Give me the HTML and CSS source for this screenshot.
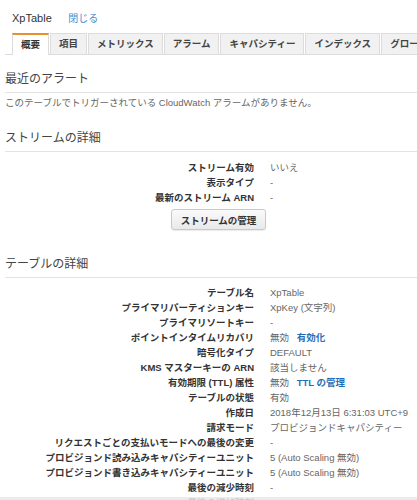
FILE: index.html
```html
<!DOCTYPE html>
<html lang="ja">
  <head>
    <meta charset="UTF-8" />
    <meta name="viewport" content="width=device-width, initial-scale=1.0" />
    <title>XpTable</title>
    <link rel="stylesheet" href="styles.css">
  </head>
  <body>
    <div class="page">
      <!-- タイトル -->
      <div class="title-bar">
        <span class="title">XpTable</span>
        <a class="close-link" href="#">閉じる</a>
      </div>

      <!-- タブ -->
      <div class="tabs">
        <div class="tab active">概要</div>
        <div class="tab">項目</div>
        <div class="tab">メトリックス</div>
        <div class="tab">アラーム</div>
        <div class="tab">キャパシティー</div>
        <div class="tab">インデックス</div>
        <div class="tab">グローバルテーブル</div>
      </div>

      <div class="section-title first">最近のアラート</div>
      <p class="note">このテーブルでトリガーされている CloudWatch アラームがありません。</p>

      <div class="section-title">ストリームの詳細</div>
      <div class="kv">
        <div class="key">ストリーム有効</div><div class="val">いいえ</div>
        <div class="key">表示タイプ</div><div class="val">-</div>
        <div class="key">最新のストリーム ARN</div><div class="val">-</div>
      </div>
      <div class="btn-row">
        <button class="btn">ストリームの管理</button>
      </div>

      <div class="section-title table-title">テーブルの詳細</div>
      <div class="kv kv-table">
        <div class="key">テーブル名</div><div class="val">XpTable</div>
        <div class="key">プライマリパーティションキー</div><div class="val">XpKey (文字列)</div>
        <div class="key">プライマリソートキー</div><div class="val">-</div>
        <div class="key">ポイントインタイムリカバリ</div><div class="val">無効 <a class="link" href="#">有効化</a></div>
        <div class="key">暗号化タイプ</div><div class="val">DEFAULT</div>
        <div class="key">KMS マスターキーの ARN</div><div class="val">該当しません</div>
        <div class="key">有効期限 (TTL) 属性</div><div class="val">無効 <a class="link" href="#">TTL の管理</a></div>
        <div class="key">テーブルの状態</div><div class="val">有効</div>
        <div class="key">作成日</div><div class="val">2018年12月13日 6:31:03 UTC+9</div>
        <div class="key">請求モード</div><div class="val">プロビジョンドキャパシティー</div>
        <div class="key">リクエストごとの支払いモードへの最後の変更</div><div class="val">-</div>
        <div class="key">プロビジョンド読み込みキャパシティーユニット</div><div class="val">5 (Auto Scaling 無効)</div>
        <div class="key">プロビジョンド書き込みキャパシティーユニット</div><div class="val">5 (Auto Scaling 無効)</div>
        <div class="key">最後の減少時刻</div><div class="val">-</div>
        <div class="key">最後の増加時刻</div><div class="val">-</div>
      </div>
    </div>

    <div class="bottom-bar"></div>
  </body>
</html>
```

FILE: styles.css
```css
/* Global Styles */
* {
  margin: 0;
  padding: 0;
  box-sizing: border-box;
}

body {
  font-family: "Liberation Sans", "Noto Sans CJK JP", sans-serif;
  background: #fff;
  color: #333;
  overflow: hidden;
  height: 500px;
}

.page {
  width: 432px;
  padding-left: 5px;
}

/* Title */
.title-bar {
  padding: 10px 0 0 7px;
  height: 24px;
  line-height: 14px;
}

.title {
  font-size: 11px;
  color: #333;
}

.close-link {
  font-size: 10px;
  color: #3f8ccf;
  text-decoration: none;
  margin-left: 12px;
}

/* Tabs */
.tabs {
  display: flex;
  align-items: flex-end;
  margin-top: 9px;
  padding-left: 7px;
  height: 22px;
  border-bottom: 1px solid #dcdcdc;
  white-space: nowrap;
}

.tab {
  flex-shrink: 0;
  height: 21px;
  line-height: 19px;
  padding: 0 8px;
  margin-right: 1px;
  font-size: 9.5px;
  font-weight: bold;
  color: #444;
  background: #f1f1f1;
  border: 1px solid #dcdcdc;
  border-bottom: none;
}

.tab.active {
  height: 22px;
  margin-bottom: -1px;
  background: #fff;
  border-top: 2px solid #e8912c;
  color: #333;
}

/* Sections */
.section-title {
  margin-top: 20px;
  padding-bottom: 5px;
  line-height: 16px;
  font-size: 12px;
  color: #444;
  border-bottom: 1px solid #e3e3e3;
}

.section-title.first {
  margin-top: 16px;
}

.section-title.table-title {
  margin-top: 26px;
}

.note {
  margin-top: 3px;
  line-height: 14px;
  font-size: 9.5px;
  color: #666;
}

/* Key / value rows */
.kv {
  display: grid;
  grid-template-columns: 257px 1fr;
  padding-top: 8px;
  line-height: 15px;
  font-size: 9.5px;
  white-space: nowrap;
}

.kv-table {
  padding-top: 7px;
}

.key {
  text-align: right;
  padding-right: 8px;
  font-weight: bold;
  color: #333;
}

.val {
  padding-left: 8px;
  color: #666;
}

.link {
  margin-left: 5px;
  color: #1f6fb8;
  font-weight: bold;
  text-decoration: none;
}

/* Button */
.btn-row {
  display: flex;
  justify-content: center;
  margin-top: 4px;
}

.btn {
  height: 21px;
  padding: 0 9px;
  font-family: "Liberation Sans", "Noto Sans CJK JP", sans-serif;
  font-size: 9.5px;
  font-weight: bold;
  color: #333;
  background: linear-gradient(#fafafa, #e9e9e9);
  border: 1px solid #c9c9c9;
  border-radius: 3px;
  box-shadow: 0 1px 1px rgba(0, 0, 0, 0.08);
}

.bottom-bar {
  position: fixed;
  left: 0;
  right: 0;
  bottom: 0;
  height: 3px;
  background: rgba(232, 232, 232, 0.85);
}
```
